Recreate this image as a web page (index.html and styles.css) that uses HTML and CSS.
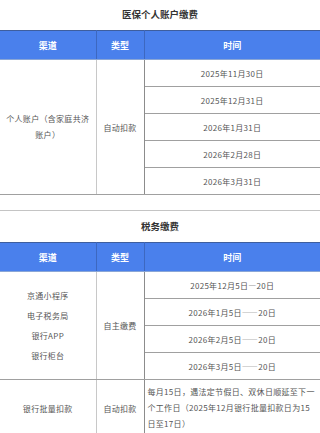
FILE: index.html
```html
<!DOCTYPE html>
<html lang="zh-CN">
<head>
<meta charset="utf-8">
<title>缴费</title>
<link rel="stylesheet" href="styles.css">
</head>
<body>
<section class="block">
  <h2 class="title">医保个人账户缴费</h2>
  <table class="grid">
    <colgroup><col class="w1"><col class="w2"><col class="w3"></colgroup>
    <thead>
      <tr><th>渠道</th><th>类型</th><th>时间</th></tr>
    </thead>
    <tbody>
      <tr><td rowspan="5" class="c1 wrap">个人账户（含家庭共济账户）</td><td rowspan="5" class="c2">自动扣款</td><td>2025年11月30日</td></tr>
      <tr><td>2025年12月31日</td></tr>
      <tr><td>2026年1月31日</td></tr>
      <tr><td>2026年2月28日</td></tr>
      <tr><td>2026年3月31日</td></tr>
    </tbody>
  </table>
</section>
<div class="sep"></div>
<section class="block">
  <h2 class="title t2">税务缴费</h2>
  <table class="grid">
    <colgroup><col class="w1"><col class="w2"><col class="w3"></colgroup>
    <thead>
      <tr><th>渠道</th><th>类型</th><th>时间</th></tr>
    </thead>
    <tbody>
      <tr><td rowspan="4" class="c1"><p class="ch">京通小程序</p><p class="ch">电子税务局</p><p class="ch">银行APP</p><p class="ch">银行柜台</p></td><td rowspan="4" class="c2">自主缴费</td><td>2025年12月5日—20日</td></tr>
      <tr><td>2026年1月5日——20日</td></tr>
      <tr><td>2026年2月5日——20日</td></tr>
      <tr><td>2026年3月5日——20日</td></tr>
      <tr><td class="c1">银行批量扣款</td><td class="c2">自动扣款</td><td class="note">每月15日，遇法定节假日、双休日顺延至下一个工作日（2025年12月银行批量扣款日为15日至17日）</td></tr>
    </tbody>
  </table>
</section>
</body>
</html>
```
FILE: styles.css
```css
body {
  margin: 0;
  background: #fff;
  color: #555;
  font-family: "Noto Sans CJK SC", "Noto Sans", sans-serif;
}
.title {
  margin: 0;
  height: 30px;
  line-height: 28px;
  font-size: 9.5px;
  font-weight: bold;
  text-align: center;
  color: #333;
}
.t2 {
  height: 31px;
  line-height: 30px;
}
.grid {
  width: 320px;
  border-collapse: collapse;
  table-layout: fixed;
}
.w1 { width: 96px; }
.w2 { width: 48px; }
.w3 { width: 176px; }
.grid th {
  background: #4a80ec;
  color: #fff;
  font-size: 9px;
  font-weight: bold;
  height: 28px;
  padding: 0;
  border-top: 1px solid #3e5e9e;
  border-bottom: 1px solid #8aa6d6;
  border-right: 1px solid #3d68c0;
}
.grid th:last-child { border-right: none; }
.grid td {
  font-size: 8px;
  letter-spacing: 0.3px;
  text-align: center;
  height: 26px;
  padding: 0;
  border-bottom: 1px solid #a0a0a0;
}
.grid td.c1 {
  border-right: 1px solid #c8c8c8;
  padding: 0 4px;
}
.grid td.c2 {
  border-right: 1px solid #8c8c8c;
}
.wrap {
  line-height: 16px;
}
.ch {
  margin: 0;
  line-height: 20px;
}
.grid td.note {
  text-align: left;
  padding: 4px 2px 4px 3px;
  line-height: 16px;
}
.sep {
  height: 15px;
  border-bottom: 1px solid #c4c4c4;
}
```
